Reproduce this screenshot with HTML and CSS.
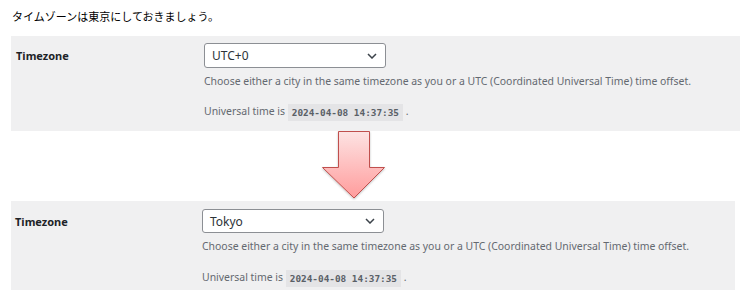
FILE: index.html
```html
<!DOCTYPE html>
<html lang="ja">
<head>
<meta charset="utf-8">
<title>Timezone</title>
<link rel="stylesheet" href="styles.css">
</head>
<body>
<p class="intro">タイムゾーンは東京にしておきましょう。</p>

<section class="panel panel-top">
  <div class="label">Timezone</div>
  <div class="field">
    <div class="select">
      <span>UTC+0</span>
      <svg class="chev" width="10" height="6" viewBox="0 0 10 6"><path d="M1 1 L5 5 L9 1" fill="none" stroke="#3c434a" stroke-width="1.5"/></svg>
    </div>
    <p class="desc">Choose either a city in the same timezone as you or a UTC (Coordinated Universal Time) time offset.</p>
    <p class="desc time">Universal time is <code>2024-04-08 14:37:35</code> .</p>
  </div>
</section>

<div class="arrow-wrap">
  <svg class="arrow" width="72" height="72" viewBox="0 0 72 72">
    <defs>
      <linearGradient id="g" x1="0" y1="0" x2="0" y2="1">
        <stop offset="0" stop-color="#fde3e3"/>
        <stop offset="1" stop-color="#ff9c9c"/>
      </linearGradient>
      <filter id="sh" x="-20%" y="-20%" width="140%" height="140%">
        <feDropShadow dx="0" dy="1" stdDeviation="1" flood-color="#000" flood-opacity="0.25"/>
      </filter>
    </defs>
    <polygon points="20.5,0.5 51.5,0.5 51.5,36.5 66.5,36.5 36,67 4.5,36.5 20.5,36.5" fill="url(#g)" stroke="#c0504d" stroke-width="1" filter="url(#sh)"/>
  </svg>
</div>

<section class="panel panel-bottom">
  <div class="label">Timezone</div>
  <div class="field">
    <div class="select">
      <span>Tokyo</span>
      <svg class="chev" width="10" height="6" viewBox="0 0 10 6"><path d="M1 1 L5 5 L9 1" fill="none" stroke="#3c434a" stroke-width="1.5"/></svg>
    </div>
    <p class="desc">Choose either a city in the same timezone as you or a UTC (Coordinated Universal Time) time offset.</p>
    <p class="desc time">Universal time is <code>2024-04-08 14:37:35</code> .</p>
  </div>
</section>
</body>
</html>
```

FILE: styles.css
```css
html, body {
  margin: 0;
  padding: 0;
  background: #ffffff;
}
body {
  font-family: "Noto Sans", "Noto Sans CJK JP", sans-serif;
  color: #1d2327;
  width: 750px;
  height: 308px;
  overflow: hidden;
}
.intro {
  margin: 0;
  padding: 8px 0 0 12px;
  height: 28px;
  box-sizing: border-box;
  font-family: "Noto Sans CJK JP", sans-serif;
  font-size: 11px;
  line-height: 16px;
  color: #000;
}
.panel {
  display: flex;
  background: #f0f0f1;
  margin-left: 11px;
  box-sizing: border-box;
}
.panel-top {
  width: 729px;
  height: 95px;
  margin-top: 8px;
  padding-top: 7px;
}
.panel-bottom {
  width: 724px;
  height: 89px;
  padding-top: 8px;
}
.label {
  font-weight: bold;
  font-size: 11px;
  line-height: 25px;
  color: #1d2327;
  padding-left: 5px;
  width: 188px;
  flex: none;
}
.panel-bottom .label {
  padding-left: 4px;
  width: 187px;
}
.field {
  display: flex;
  flex-direction: column;
}
.select {
  width: 182px;
  height: 25px;
  box-sizing: border-box;
  border: 1px solid #8c8f94;
  border-radius: 3px;
  background: #fff;
  display: flex;
  align-items: center;
  justify-content: space-between;
  padding: 0 8px 0 7px;
  font-size: 12px;
  color: #2c3338;
}
.panel-bottom .select {
  height: 24px;
}
.chev {
  display: block;
}
.desc {
  margin: 0;
  font-size: 10.45px;
  line-height: 15px;
  color: #646970;
}
.panel-top .desc:first-of-type {
  margin-top: 6px;
}
.panel-bottom .desc:first-of-type {
  margin-top: 6px;
}
.time {
  margin-top: 15px;
}
.panel-bottom .time {
  margin-top: 16px;
}
code {
  display: inline-block;
  font-family: "DejaVu Sans Mono", monospace;
  font-size: 9.4px;
  font-weight: bold;
  line-height: 17px;
  padding: 0 4px;
  background: #e4e4e6;
  color: #5a6066;
  vertical-align: middle;
}
.arrow-wrap {
  height: 70px;
}
.arrow {
  display: block;
  margin-left: 318px;
}
```
